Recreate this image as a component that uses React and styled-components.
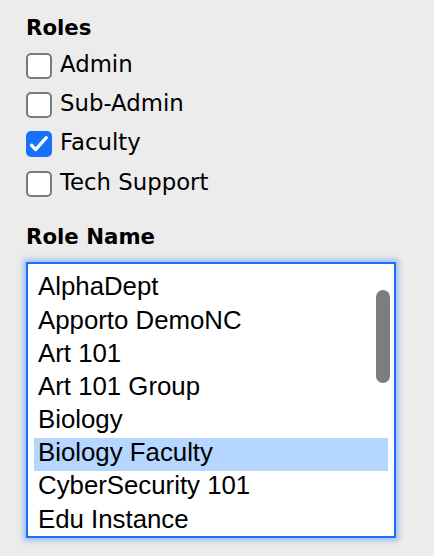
import React from "react";
import styled, { createGlobalStyle } from "styled-components";

const GlobalStyle = createGlobalStyle`
  html, body { margin: 0; padding: 0; background: #ececec; }
  body { font-family: "DejaVu Sans", "Verdana", sans-serif; color: #000; }
`;

const Page = styled.div`
  display: flex;
  flex-direction: column;
  padding: 16px 0 0 26px;
  width: 434px;
  height: 556px;
  box-sizing: border-box;
  overflow: hidden;
`;

const Heading = styled.div`
  font-family: "DejaVu Sans", sans-serif;
  font-weight: bold;
  font-size: 21.3px;
  line-height: 24px;
  margin-top: ${(p) => p.$mt || 0}px;
`;

const Group = styled.div`
  display: flex;
  flex-direction: column;
  margin-top: 6px;
`;

const Row = styled.label`
  display: flex;
  align-items: center;
  height: 39.33px;
  gap: 8px;
`;

const Box = styled.span`
  box-sizing: border-box;
  width: 26px;
  height: 26px;
  border-radius: 5px;
  border: ${(p) => (p.$checked ? "none" : "2px solid #7a7a7a")};
  background: ${(p) => (p.$checked ? "#1672fd" : "#ffffff")};
  display: flex;
  align-items: center;
  justify-content: center;
  flex: none;
`;

const LabelText = styled.span`
  font-family: "DejaVu Sans", sans-serif;
  font-size: 22.8px;
  line-height: 27px;
  margin-bottom: 3px;
`;

const ListBox = styled.div`
  position: relative;
  box-sizing: border-box;
  margin-top: 13px;
  width: 370px;
  height: 276px;
  background: #fff;
  border: 2px solid #1a6dff;
  box-shadow: 0 0 5px 3px rgba(70, 140, 255, 0.45);
  overflow: hidden;
`;

const List = styled.ul`
  list-style: none;
  margin: 0;
  padding: 8px 6px 0 6px;
`;

const Item = styled.li`
  font-family: "Liberation Sans", Arial, sans-serif;
  font-size: 25.8px;
  line-height: 29px;
  height: 33.2px;
  box-sizing: border-box;
  padding: 0 4px 4px 4px;
  white-space: nowrap;
  background: ${(p) => (p.$selected ? "#b4d6ff" : "transparent")};
`;

const Thumb = styled.div`
  position: absolute;
  left: 348px;
  top: 26px;
  width: 14px;
  height: 93px;
  border-radius: 7px;
  background: #7d7d7d;
`;

const roles = [
  { name: "Admin", checked: false },
  { name: "Sub-Admin", checked: false },
  { name: "Faculty", checked: true },
  { name: "Tech Support", checked: false },
];

const names = [
  "AlphaDept",
  "Apporto DemoNC",
  "Art 101",
  "Art 101 Group",
  "Biology",
  "Biology Faculty",
  "CyberSecurity 101",
  "Edu Instance",
];

function Check() {
  return (
    <svg width="26" height="26" viewBox="0 0 26 26">
      <path
        d="M5.5 14.2 L9.6 18.6 L20.3 6.6"
        fill="none"
        stroke="#fff"
        strokeWidth="3.2"
        strokeLinecap="round"
        strokeLinejoin="round"
      />
    </svg>
  );
}

export default function App() {
  return (
    <>
      <GlobalStyle />
      <Page>
        <Heading>Roles</Heading>
        <Group>
          {roles.map((r) => (
            <Row key={r.name}>
              <Box $checked={r.checked}>{r.checked && <Check />}</Box>
              <LabelText>{r.name}</LabelText>
            </Row>
          ))}
        </Group>
        <Heading $mt={22}>Role Name</Heading>
        <ListBox>
          <List>
            {names.map((n) => (
              <Item key={n} $selected={n === "Biology Faculty"}>
                {n}
              </Item>
            ))}
          </List>
          <Thumb />
        </ListBox>
      </Page>
    </>
  );
}
